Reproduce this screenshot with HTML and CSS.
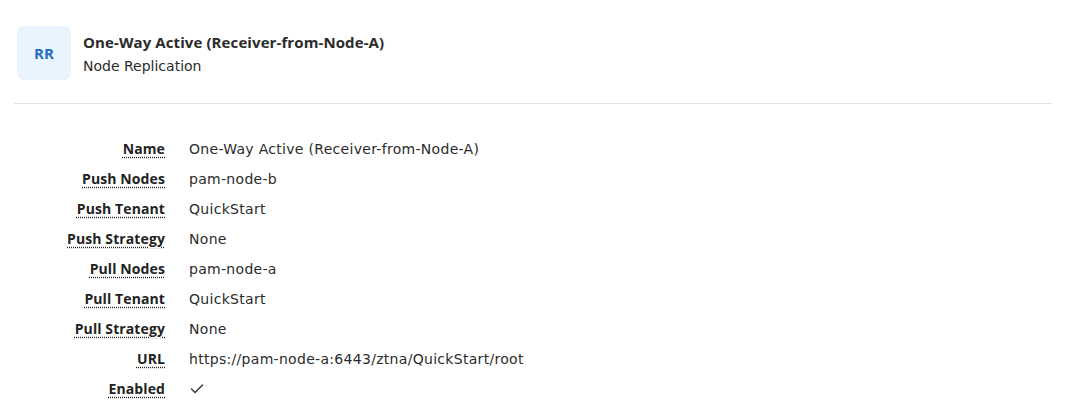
FILE: index.html
```html
<!DOCTYPE html>
<html>
<head>
<meta charset="utf-8">
<link rel="stylesheet" href="styles.css">
</head>
<body>
<div class="page">
  <div class="header">
    <div class="avatar">RR</div>
    <div class="titles">
      <div class="title">One-Way Active (Receiver-from-Node-A)</div>
      <div class="subtitle">Node Replication</div>
    </div>
  </div>
  <dl class="props">
    <dt><abbr title="Name">Name</abbr></dt><dd>One-Way Active (Receiver-from-Node-A)</dd>
    <dt><abbr title="Push Nodes">Push Nodes</abbr></dt><dd>pam-node-b</dd>
    <dt><abbr title="Push Tenant">Push Tenant</abbr></dt><dd>QuickStart</dd>
    <dt><abbr title="Push Strategy">Push Strategy</abbr></dt><dd>None</dd>
    <dt><abbr title="Pull Nodes">Pull Nodes</abbr></dt><dd>pam-node-a</dd>
    <dt><abbr title="Pull Tenant">Pull Tenant</abbr></dt><dd>QuickStart</dd>
    <dt><abbr title="Pull Strategy">Pull Strategy</abbr></dt><dd>None</dd>
    <dt><abbr title="URL">URL</abbr></dt><dd>https://pam-node-a:6443/ztna/QuickStart/root</dd>
    <dt><abbr title="Enabled">Enabled</abbr></dt><dd><svg class="check" width="14" height="12" viewBox="0 0 14 12"><path d="M1.5 6 L5 9.5 L12.5 2" fill="none" stroke="#333" stroke-width="1.4" stroke-linecap="round" stroke-linejoin="round"/></svg></dd>
  </dl>
</div>
</body>
</html>
```

FILE: styles.css
```css
* { box-sizing: border-box; }
html, body { margin: 0; padding: 0; background: #fff; }
body {
  font-family: "DejaVu Sans", "Open Sans", sans-serif;
  color: #2b2b2b;
  font-size: 14px;
}
.page {
  padding: 0 13px 0 14px;
}
.header {
  display: flex;
  align-items: flex-start;
  gap: 12px;
  padding: 26px 0 23px 3px;
  border-bottom: 1px solid #e2e2e2;
}
.avatar {
  width: 54px;
  height: 54px;
  border-radius: 7px;
  background: #eaf4fe;
  color: #1f6fc5;
  font-family: "Open Sans", sans-serif;
  font-weight: 700;
  font-size: 15px;
  display: flex;
  align-items: center;
  justify-content: center;
}
.titles {
  padding-top: 6px;
  display: flex;
  flex-direction: column;
  gap: 3px;
}
.title {
  font-family: "Open Sans", sans-serif;
  font-weight: 700;
  font-size: 15px;
  letter-spacing: 0.1px;
  line-height: 20px;
  color: #2b2b2b;
}
.subtitle {
  line-height: 20px;
  padding-top: 1px;
}
.props {
  margin: 0;
  padding-top: 35px;
  display: grid;
  grid-template-columns: 151px 1fr;
  column-gap: 24px;
  row-gap: 10px;
}
.props dt, .props dd {
  margin: 0;
  line-height: 20px;
}
.props dd {
  letter-spacing: 0.3px;
}
.props dt {
  text-align: right;
  font-family: "Open Sans", sans-serif;
  font-weight: 700;
  letter-spacing: 0.1px;
  color: #222;
}
.props abbr {
  text-decoration: underline dotted;
  text-underline-offset: 3px;
}
.check { vertical-align: middle; margin-left: 1px; margin-top: -3px; }
```
